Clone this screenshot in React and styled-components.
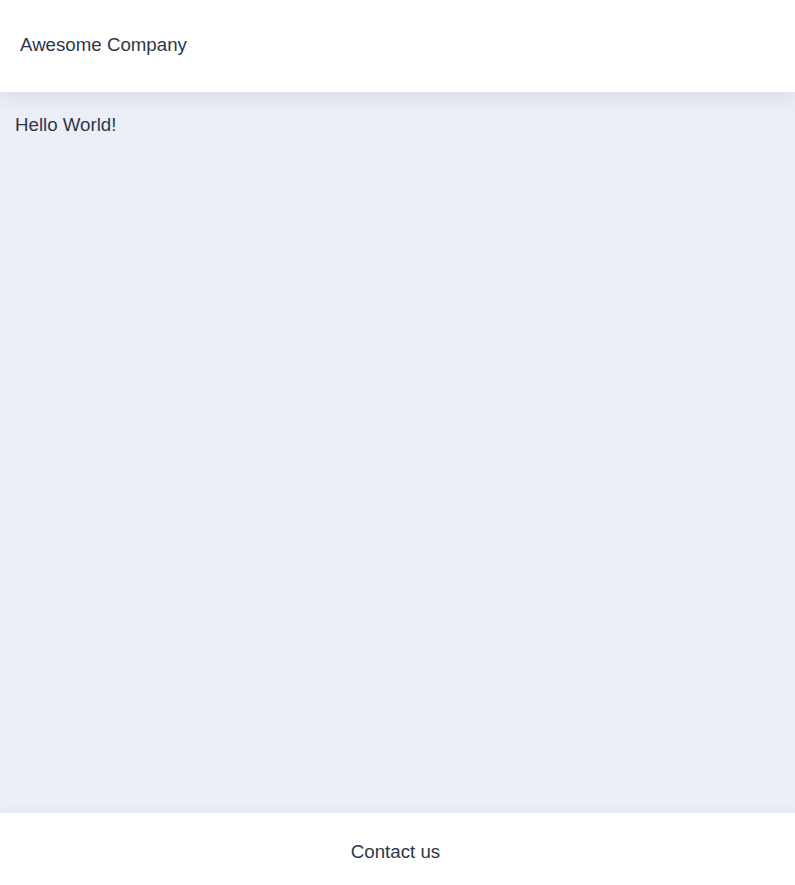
import styled, { createGlobalStyle } from 'styled-components';

const GlobalStyle = createGlobalStyle`
  html, body, #root {
    margin: 0;
    height: 100%;
  }
  body {
    font-family: "Liberation Sans", Arial, sans-serif;
    color: #2d3748;
  }
`;

const Layout = styled.div`
  display: flex;
  flex-direction: column;
  height: 100%;
  background: #eceff7;
`;

const Header = styled.header`
  position: relative;
  z-index: 2;
  display: flex;
  align-items: center;
  height: 92px;
  padding: 0 20px 2px;
  box-sizing: border-box;
  background: #fff;
  box-shadow: 0 4px 20px rgba(45, 55, 72, 0.12);
  font-size: 18.7px;
`;

const Main = styled.main`
  flex: 1;
  padding: 22px 15px;
  font-size: 18.7px;
`;

const Footer = styled.footer`
  display: flex;
  align-items: center;
  justify-content: center;
  height: 72px;
  padding-top: 5px;
  padding-right: 4px;
  box-sizing: border-box;
  background: #fff;
  box-shadow: 0 -2px 10px rgba(45, 55, 72, 0.05);
  font-size: 18.7px;
`;

export default function App() {
  return (
    <>
      <GlobalStyle />
      <Layout>
        <Header>Awesome Company</Header>
        <Main>Hello World!</Main>
        <Footer>Contact us</Footer>
      </Layout>
    </>
  );
}
